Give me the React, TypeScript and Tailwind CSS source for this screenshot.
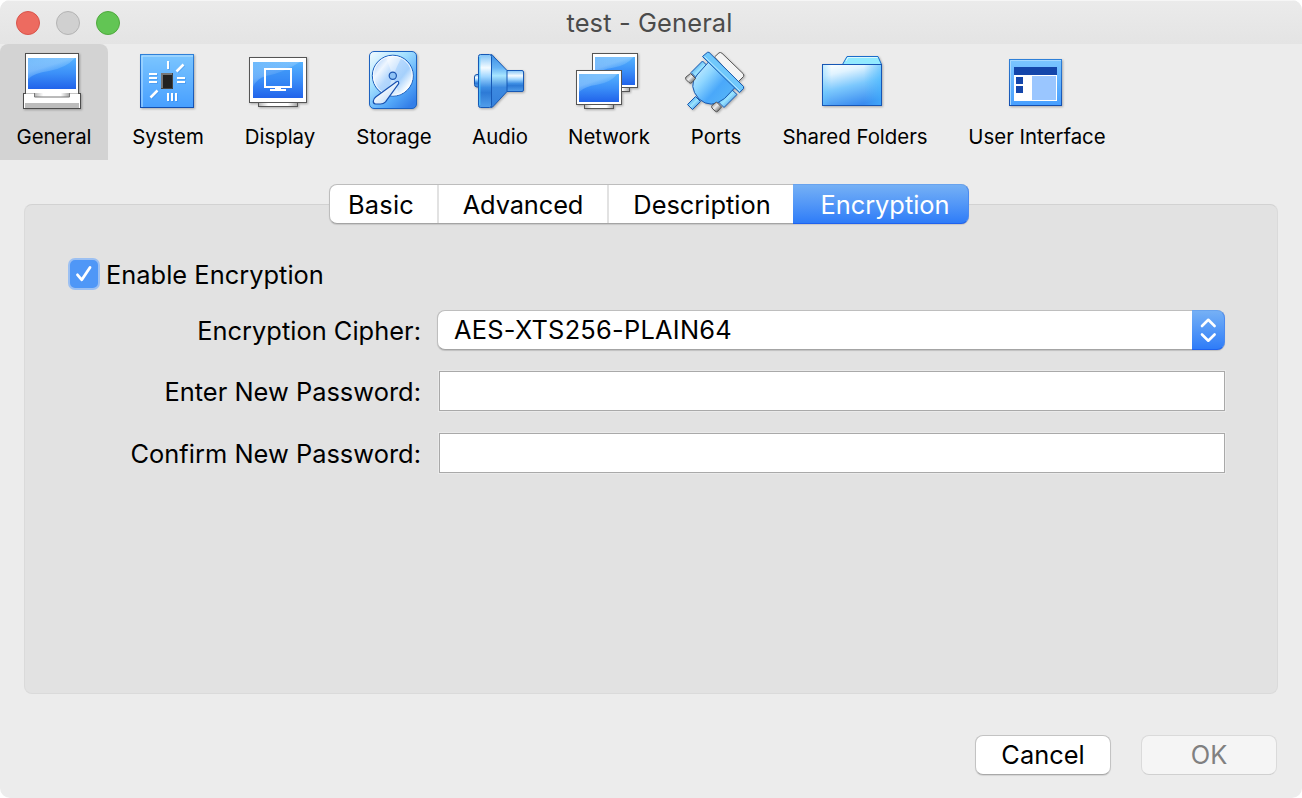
import React from "react";

function Shadowed({ x, id, children }: { x: number; id: string; children: React.ReactNode }) {
  return (
    <svg
      width="64"
      height="66"
      viewBox={`${x} 48 64 66`}
      className="shrink-0 overflow-visible drop-shadow-[1px_1px_1px_rgba(0,0,0,0.28)]"
    >
      <defs>
        <linearGradient id={`${id}-screen`} x1="0" y1="0" x2="0" y2="1">
          <stop offset="0" stopColor="#55b2fe" />
          <stop offset="0.5" stopColor="#3b8ff8" />
          <stop offset="1" stopColor="#2163ea" />
        </linearGradient>
        <linearGradient id={`${id}-glare`} x1="0.1" y1="0" x2="0.75" y2="0.9">
          <stop offset="0" stopColor="#7fc0fb" stopOpacity="0.8" />
          <stop offset="0.45" stopColor="#a3d3fd" stopOpacity="0.55" />
          <stop offset="0.9" stopColor="#6fbcfd" stopOpacity="0.05" />
        </linearGradient>
        <linearGradient id={`${id}-tile`} x1="0" y1="0" x2="0" y2="1">
          <stop offset="0" stopColor="#7cc6ff" />
          <stop offset="1" stopColor="#479fff" />
        </linearGradient>
        <linearGradient id={`${id}-edge`} x1="0" y1="0" x2="0" y2="1">
          <stop offset="0" stopColor="#2f80d8" />
          <stop offset="1" stopColor="#134fb0" />
        </linearGradient>
        <linearGradient id={`${id}-stand`} x1="0" y1="0" x2="1" y2="0">
          <stop offset="0" stopColor="#b5b5b5" />
          <stop offset="0.25" stopColor="#fff" />
          <stop offset="0.75" stopColor="#fff" />
          <stop offset="1" stopColor="#a5a5a5" />
        </linearGradient>
      </defs>
      {children}
    </svg>
  );
}

function Screen({ id, x, y, w, h, m }: { id: string; x: number; y: number; w: number; h: number; m: number }) {
  const ix = x + m;
  const iy = y + m + 1;
  const iw = w - 2 * m;
  const ih = h - 2 * m - 1;
  return (
    <g>
      <rect x={x + 0.5} y={y + 0.5} width={w - 1} height={h - 1} fill="#fff" stroke="#555" />
      <rect x={ix} y={iy} width={iw} height={ih} fill={`url(#${id}-screen)`} />
      <path
        d={`M${ix} ${iy}H${ix + iw * 0.96}Q${ix + iw * 0.78} ${iy + ih * 0.32} ${ix + iw * 0.45} ${iy + ih * 0.38}Q${ix + iw * 0.14} ${iy + ih * 0.44} ${ix} ${iy + ih * 0.64}Z`}
        fill={`url(#${id}-glare)`}
      />
    </g>
  );
}

function GeneralIcon() {
  return (
    <Shadowed x={22} id="gen">
      <rect x="23.5" y="93.5" width="57" height="15" fill="#fff" stroke="#4c4c4c" />
      <rect x="25" y="103" width="54" height="5" fill="#bcbcbc" />
      <rect x="25" y="53" width="54" height="41" fill="#4f4f4f" />
      <rect x="26" y="54" width="52" height="39" fill="#fff" />
      <path d="M26 93.500H78" stroke="#c4c4c4" />
      <rect x="28" y="58" width="48" height="31" fill="url(#gen-screen)" />
      <path d="M28 58H75Q66 68 49 71Q34 73 28 79Z" fill="url(#gen-glare)" />
      <path d="M34.500 93V97H69.500V93" fill="url(#gen-stand)" stroke="#777" />
    </Shadowed>
  );
}

function SystemIcon() {
  return (
    <Shadowed x={136} id="sys">
      <rect x="140.5" y="54.5" width="53" height="53" fill="url(#sys-tile)" stroke="url(#sys-edge)" />
      <path d="M142 107V56H193" fill="none" stroke="#b9e1ff" />
      <g stroke="#2f7fdf" strokeWidth="2" opacity="0.35" transform="translate(1 1)">
        <path d="M168 61V69M149 74H157M149 78H157M149 82H157M177 78H185M177 82H185M168 93V101M172 93V101M176 93V101" />
        <path d="M176.500 71.500L183.500 64.500M150.500 97.500L157.500 90.500" />
      </g>
      <g stroke="#fff" strokeWidth="2">
        <path d="M168 61V69M149 74H157M149 78H157M149 82H157M177 78H185M177 82H185M168 93V101M172 93V101M176 93V101" />
        <path d="M176.500 71.500L183.500 64.500M150.500 97.500L157.500 90.500" strokeWidth="2.500" />
      </g>
      <rect x="161" y="73" width="12" height="16" fill="#222" />
      <path d="M162 88V74H173" fill="none" stroke="#777" strokeWidth="2" />
      <path d="M161 88.500H172.500V73" fill="none" stroke="#444" />
    </Shadowed>
  );
}

function DisplayIcon() {
  return (
    <Shadowed x={248} id="dis">
      <rect x="258.5" y="102.5" width="39" height="4" fill="url(#dis-stand)" stroke="#555" />
      <rect x="249.5" y="57.5" width="57" height="45" fill="#fff" stroke="#555" />
      <rect x="253" y="62" width="50" height="36" fill="url(#dis-screen)" />
      <path d="M253 62H300Q283 73 266 76Q256 79 253 87Z" fill="url(#dis-glare)" opacity="0.8" />
      <rect x="265" y="69" width="26" height="18" fill="#2c7df0" fillOpacity="0.3" stroke="#fff" strokeWidth="2" />
      <path d="M275 89H281M270 90H286" stroke="#fff" strokeWidth="2" />
    </Shadowed>
  );
}

function StorageIcon() {
  return (
    <Shadowed x={362} id="sto">
      <defs>
        <linearGradient id="sto-body" x1="0" y1="0" x2="0.8" y2="1">
          <stop offset="0" stopColor="#f4fcff" />
          <stop offset="0.4" stopColor="#a4e0ff" />
          <stop offset="0.75" stopColor="#55a9f9" />
          <stop offset="1" stopColor="#347fe8" />
        </linearGradient>
        <linearGradient id="sto-disc" x1="0" y1="0.1" x2="1" y2="0.9">
          <stop offset="0" stopColor="#9cc6f8" />
          <stop offset="0.25" stopColor="#eef6ff" />
          <stop offset="0.45" stopColor="#b5d8fd" />
          <stop offset="0.65" stopColor="#a5d0fc" />
          <stop offset="0.85" stopColor="#f6fbff" />
          <stop offset="1" stopColor="#b0d5fa" />
        </linearGradient>
        <linearGradient id="sto-arm" x1="0" y1="0" x2="1" y2="1">
          <stop offset="0.3" stopColor="#fff" />
          <stop offset="1" stopColor="#a9cdf3" />
        </linearGradient>
      </defs>
      <rect x="369.500" y="51.500" width="47" height="57" rx="4.500" fill="url(#sto-body)" stroke="#1c62c0" />
      <circle cx="392.800" cy="75.700" r="20.500" fill="url(#sto-disc)" stroke="#1d60bd" />
      <circle cx="392.800" cy="75.700" r="19.400" fill="none" stroke="#fff" strokeOpacity="0.8" />
      <path d="M392.800 75.700L386 57.500Q394 55 401 58ZM392.800 75.700L399 94Q392 96 387 94Z" fill="#fff" opacity="0.4" />
      <circle cx="392.800" cy="75.700" r="3.600" fill="#8fc3f5" stroke="#1b55b0" strokeWidth="1.200" />
      <path
        d="M396.500 81.800Q398.800 80.200 398.700 83.500L385.500 101.800Q383.500 104 380.500 104H375.500Q373 103.500 373.300 101Q373.600 98.500 376 96.800Z"
        fill="url(#sto-arm)"
        stroke="#174fae"
        strokeWidth="1.200"
      />
    </Shadowed>
  );
}

function AudioIcon() {
  return (
    <Shadowed x={468} id="aud">
      <defs>
        <linearGradient id="aud-metal" x1="0" y1="0" x2="0" y2="1">
          <stop offset="0" stopColor="#7fc3f7" />
          <stop offset="0.25" stopColor="#f4fbff" />
          <stop offset="0.42" stopColor="#9fd6ff" />
          <stop offset="0.62" stopColor="#3d8ee4" />
          <stop offset="0.72" stopColor="#2d7ad6" />
          <stop offset="1" stopColor="#519eea" />
        </linearGradient>
        <linearGradient id="aud-cone" x1="0" y1="0" x2="0" y2="1">
          <stop offset="0" stopColor="#3c8ee2" />
          <stop offset="0.25" stopColor="#66b3f5" />
          <stop offset="0.4" stopColor="#a8e6ff" />
          <stop offset="0.62" stopColor="#3d8ae0" />
          <stop offset="1" stopColor="#3480dc" />
        </linearGradient>
      </defs>
      <rect x="474.500" y="74.500" width="8" height="12.500" rx="2.500" fill="url(#aud-metal)" stroke="#1552a9" />
      <rect x="504.500" y="70.500" width="19" height="21" rx="1.500" fill="url(#aud-metal)" stroke="#1658b5" />
      <path d="M491 54.500Q493 55 494 57L507 70.500V91.500L494 105.500Q493 107.200 491 107.500Z" fill="url(#aud-cone)" stroke="#1658b5" />
      <rect x="478.500" y="54.500" width="13" height="53" rx="2" fill="url(#aud-metal)" stroke="#1658b5" />
      <path d="M479.800 57V105" stroke="#50c8ff" />
    </Shadowed>
  );
}

function NetworkIcon() {
  return (
    <Shadowed x={577} id="net">
      <rect x="600.500" y="87.500" width="29" height="4" fill="url(#net-stand)" stroke="#555" />
      <Screen id="net" x={592} y={53} w={46} h={35} m={3} />
      <rect x="584.500" y="104.500" width="29" height="4" fill="url(#net-stand)" stroke="#555" />
      <Screen id="net" x={576} y={70} w={46} h={35} m={3} />
    </Shadowed>
  );
}

function PortsIcon() {
  return (
    <Shadowed x={684} id="por">
      <defs>
        <linearGradient id="por-body" x1="0" y1="0.1" x2="0.9" y2="0.9">
          <stop offset="0" stopColor="#d6f3ff" />
          <stop offset="0.35" stopColor="#8ed6ff" />
          <stop offset="0.65" stopColor="#4aa8fa" />
          <stop offset="1" stopColor="#56b5f8" />
        </linearGradient>
        <linearGradient id="por-rod" x1="0" y1="0" x2="1" y2="1">
          <stop offset="0.2" stopColor="#4aa3ed" />
          <stop offset="0.5" stopColor="#9be4ff" />
          <stop offset="0.8" stopColor="#469bea" />
        </linearGradient>
        <linearGradient id="por-tip" x1="0" y1="0" x2="1" y2="1">
          <stop offset="0.1" stopColor="#888" />
          <stop offset="0.45" stopColor="#eee" />
          <stop offset="0.9" stopColor="#555" />
        </linearGradient>
      </defs>
      <path d="M714.500 57L719 52.800Q720.500 52 722 53.300L743 73.500Q744.500 75 743.500 76.500L738 82Z" fill="#f4f4f4" stroke="#555" strokeLinejoin="round" />
      <g stroke="#1757ae" strokeLinejoin="round">
        <path d="M702.500 61L708.500 67L697 78.500L691 72.500Z" fill="url(#por-rod)" />
        <path d="M731 89L737 94.500L724 107.500L718 101.500Z" fill="url(#por-rod)" />
        <path d="M687.500 104.500L695.500 96.500L700.500 101.500L692.500 109.500Z" fill="url(#por-rod)" />
        <path d="M709 61.500L735 87.500L724.500 98.500Q711 109.500 699 99Q687.500 86 697 75Z" fill="url(#por-body)" />
        <path d="M702.500 56.500L707.500 52.300H709L743.500 86.500V88.500L739.500 92.700Z" fill="#70c8fb" />
      </g>
      <path d="M704.500 56.500L740 91" stroke="#b9e9ff" />
      <g stroke="#555" strokeLinejoin="round">
        <path d="M690.500 73.500L695.500 78.500L692 82.500Q690.500 84 689 82.500L686 79.500Q685 78 686 77Z" fill="url(#por-tip)" />
        <path d="M716.500 102L721.500 107L718 111Q716.500 112.500 715 111L712 108Q711 106.500 712 105.500Z" fill="url(#por-tip)" />
      </g>
    </Shadowed>
  );
}

function FolderIcon() {
  return (
    <Shadowed x={823} id="fol">
      <defs>
        <linearGradient id="fol-front" x1="0.2" y1="0" x2="0.55" y2="1">
          <stop offset="0" stopColor="#fafeff" />
          <stop offset="0.2" stopColor="#e0f3ff" />
          <stop offset="0.55" stopColor="#7cc8fd" />
          <stop offset="1" stopColor="#3a8cf0" />
        </linearGradient>
        <linearGradient id="fol-side" x1="0" y1="0" x2="1" y2="0">
          <stop offset="0" stopColor="#63ccff" stopOpacity="0.4" />
          <stop offset="0.15" stopColor="#43c0ff" stopOpacity="0" />
          <stop offset="0.7" stopColor="#43b8ff" stopOpacity="0" />
          <stop offset="1" stopColor="#43b8ff" stopOpacity="0.6" />
        </linearGradient>
      </defs>
      <path d="M842.500 64.500L847 56.500H878L881.500 64.500Z" fill="#92eaff" stroke="#1b6ccb" />
      <path d="M846 61L848 57.500H877.500" fill="none" stroke="#d8f8ff" />
      <rect x="822.500" y="64.500" width="59" height="41" fill="url(#fol-front)" />
      <rect x="822.500" y="64.500" width="59" height="41" fill="url(#fol-side)" stroke="#1656b5" />
    </Shadowed>
  );
}

function InterfaceIcon() {
  return (
    <Shadowed x={1005} id="int">
      <rect x="1009.500" y="59.500" width="52" height="46" fill="url(#int-tile)" stroke="url(#int-edge)" />
      <path d="M1010.500 105V60.500H1061" fill="none" stroke="#a5d8ff" />
      <rect x="1014" y="67" width="43" height="8" fill="#1446aa" />
      <rect x="1014" y="75" width="43" height="26" fill="#fff" />
      <path d="M1016 77h7v7h-7zM1016 86h7v7h-7z" fill="#1446aa" />
      <rect x="1032" y="76" width="24" height="24" fill="#9ac6ff" />
    </Shadowed>
  );
}

const tools = [
  { label: "General", icon: <GeneralIcon />, cls: "w-[108px] rounded-t-lg bg-[#d3d3d3]" },
  { label: "System", icon: <SystemIcon />, cls: "w-[120px]" },
  { label: "Display", icon: <DisplayIcon />, cls: "w-[104px]" },
  { label: "Storage", icon: <StorageIcon />, cls: "w-[124px]" },
  { label: "Audio", icon: <AudioIcon />, cls: "w-[88px]" },
  { label: "Network", icon: <NetworkIcon />, cls: "w-[130px]" },
  { label: "Ports", icon: <PortsIcon />, cls: "w-[84px]" },
  { label: "Shared Folders", icon: <FolderIcon />, cls: "w-[194px]" },
  { label: "User Interface", icon: <InterfaceIcon />, cls: "w-[170px]" },
];

function PasswordRow({ label }: { label: string }) {
  return (
    <label className="flex h-10 items-center">
      <span className="w-[397px] pt-px pr-px text-right tracking-[0.03px] whitespace-nowrap">{label}</span>
      <input
        type="password"
        className="ml-[17px] h-10 w-[786px] border border-[#a9a9a9] bg-white shadow-[0_0_0_1px_#eaeaea] outline-none"
      />
    </label>
  );
}

export default function App() {
  return (
    <div className="h-[798px] w-[1302px] bg-white font-['Inter','Liberation_Sans',sans-serif] text-[25.4px] leading-[38px] text-black">
      <div className="flex h-full flex-col overflow-hidden rounded-[10px] bg-[#ececec]">
        <header className="grid h-11 shrink-0 grid-cols-[1fr_auto_1fr] items-center border-t border-[#f6f6f6] bg-linear-to-b from-[#ebebeb] to-[#e4e4e4]">
          <div className="flex gap-4 pl-4">
            <span className="size-6 rounded-full border border-[#d9544b] bg-[#ed6b60]" />
            <span className="size-6 rounded-full border border-[#b4b4b4] bg-[#d0d0d0]" />
            <span className="size-6 rounded-full border border-[#4fa93d] bg-[#62c554]" />
          </div>
          <h1 className="pr-[3px] tracking-[0.15px] text-[#4b4b4b]">test - General</h1>
          <div />
        </header>

        <nav className="flex h-[116px] shrink-0">
          {tools.map((t) => (
            <button key={t.label} className={`flex h-full shrink-0 flex-col items-center pt-1 ${t.cls}`}>
              {t.icon}
              <span className="mt-2 text-[20.4px] leading-[30px] whitespace-nowrap">{t.label}</span>
            </button>
          ))}
        </nav>

        <main className="flex flex-col px-6 pt-6">
          <div className="z-10 ml-[305px] flex h-10 w-[640px] rounded-lg border border-[#bdbdbd] border-b-[#a4a4a4] bg-white leading-[34px] shadow-[0_1px_1px_rgba(0,0,0,0.12)]">
            <button className="w-[109px] border-r-2 border-[#e2e2e2] pt-0.5 pr-[5px] tracking-[0.2px]">Basic</button>
            <button className="w-[170px] border-r-2 border-[#e2e2e2] pt-0.5 tracking-[-0.1px]">Advanced</button>
            <button className="w-[184px] pt-0.5 pl-0.5">Description</button>
            <button className="-my-px -mr-px flex-1 rounded-r-lg border border-l-0 border-t-[#68a3ee] border-r-[#4a8af0] border-b-[#1f62ee] bg-linear-to-b from-[#75b0f5] to-[#2e7cf8] pt-0.5 pl-[9px] text-white">
              Encryption
            </button>
          </div>

          <section className="-mt-5 h-[490px] rounded-lg border border-[#dadada] border-t-[#d2d2d2] bg-[#e2e2e2]">
            <label className="mt-[53px] ml-[43px] flex h-8 items-center">
              <span className="flex size-8 items-center justify-center rounded-[7px] border-2 border-[#9cc0f2] bg-[#4f97f7]">
                <svg width="20" height="20" viewBox="0 0 20 20" fill="none" stroke="#fff" strokeWidth="2.800" strokeLinecap="round" strokeLinejoin="round">
                  <path d="M3.500 10.800L7.800 15.800L16 3.500" />
                </svg>
              </span>
              <span className="ml-1.5 pt-px tracking-[0.03px]">Enable Encryption</span>
            </label>
            <div className="mt-5 flex h-10 items-center">
              <span className="w-[397px] pt-px pr-px text-right tracking-[0.03px] whitespace-nowrap">Encryption Cipher:</span>
              <div className="ml-[15px] flex h-10 w-[788px] items-center rounded-lg border border-[#bebebe] border-b-[#a4a4a4] bg-white shadow-[0_1px_1px_rgba(0,0,0,0.15)]">
                <span className="flex-1 pb-px pl-4 tracking-[0.25px]">AES-XTS256-PLAIN64</span>
                <span className="-my-px -mr-px flex h-10 w-[33px] items-center justify-center rounded-r-lg border border-l-0 border-t-[#68a3ee] border-r-[#4a8af0] border-b-[#1f62ee] bg-linear-to-b from-[#75b0f5] to-[#2e7cf8]">
                  <svg width="18" height="26" viewBox="0 0 18 26" fill="none" stroke="#fff" strokeWidth="2.600" strokeLinecap="round" strokeLinejoin="round">
                    <path d="M3 9L9.300 2.800L15.600 9M3 17.500L9.300 23.700L15.600 17.500" />
                  </svg>
                </span>
              </div>
            </div>
            <div className="mt-[21px] flex flex-col gap-[22px]">
              <PasswordRow label="Enter New Password:" />
              <PasswordRow label="Confirm New Password:" />
            </div>
          </section>
        </main>

        <footer className="mt-[41px] flex justify-end gap-[30px] pr-[25px]">
          <button className="h-10 w-[136px] rounded-lg border border-[#c3c3c3] border-b-[#a9a9a9] bg-white leading-[36px] shadow-[0_1px_1px_rgba(0,0,0,0.1)]">
            Cancel
          </button>
          <button disabled className="h-10 w-[136px] rounded-lg border border-[#dadada] border-b-[#d0d0d0] bg-[#f5f5f5] leading-[36px] text-[#808080]">
            OK
          </button>
        </footer>
      </div>
    </div>
  );
}
